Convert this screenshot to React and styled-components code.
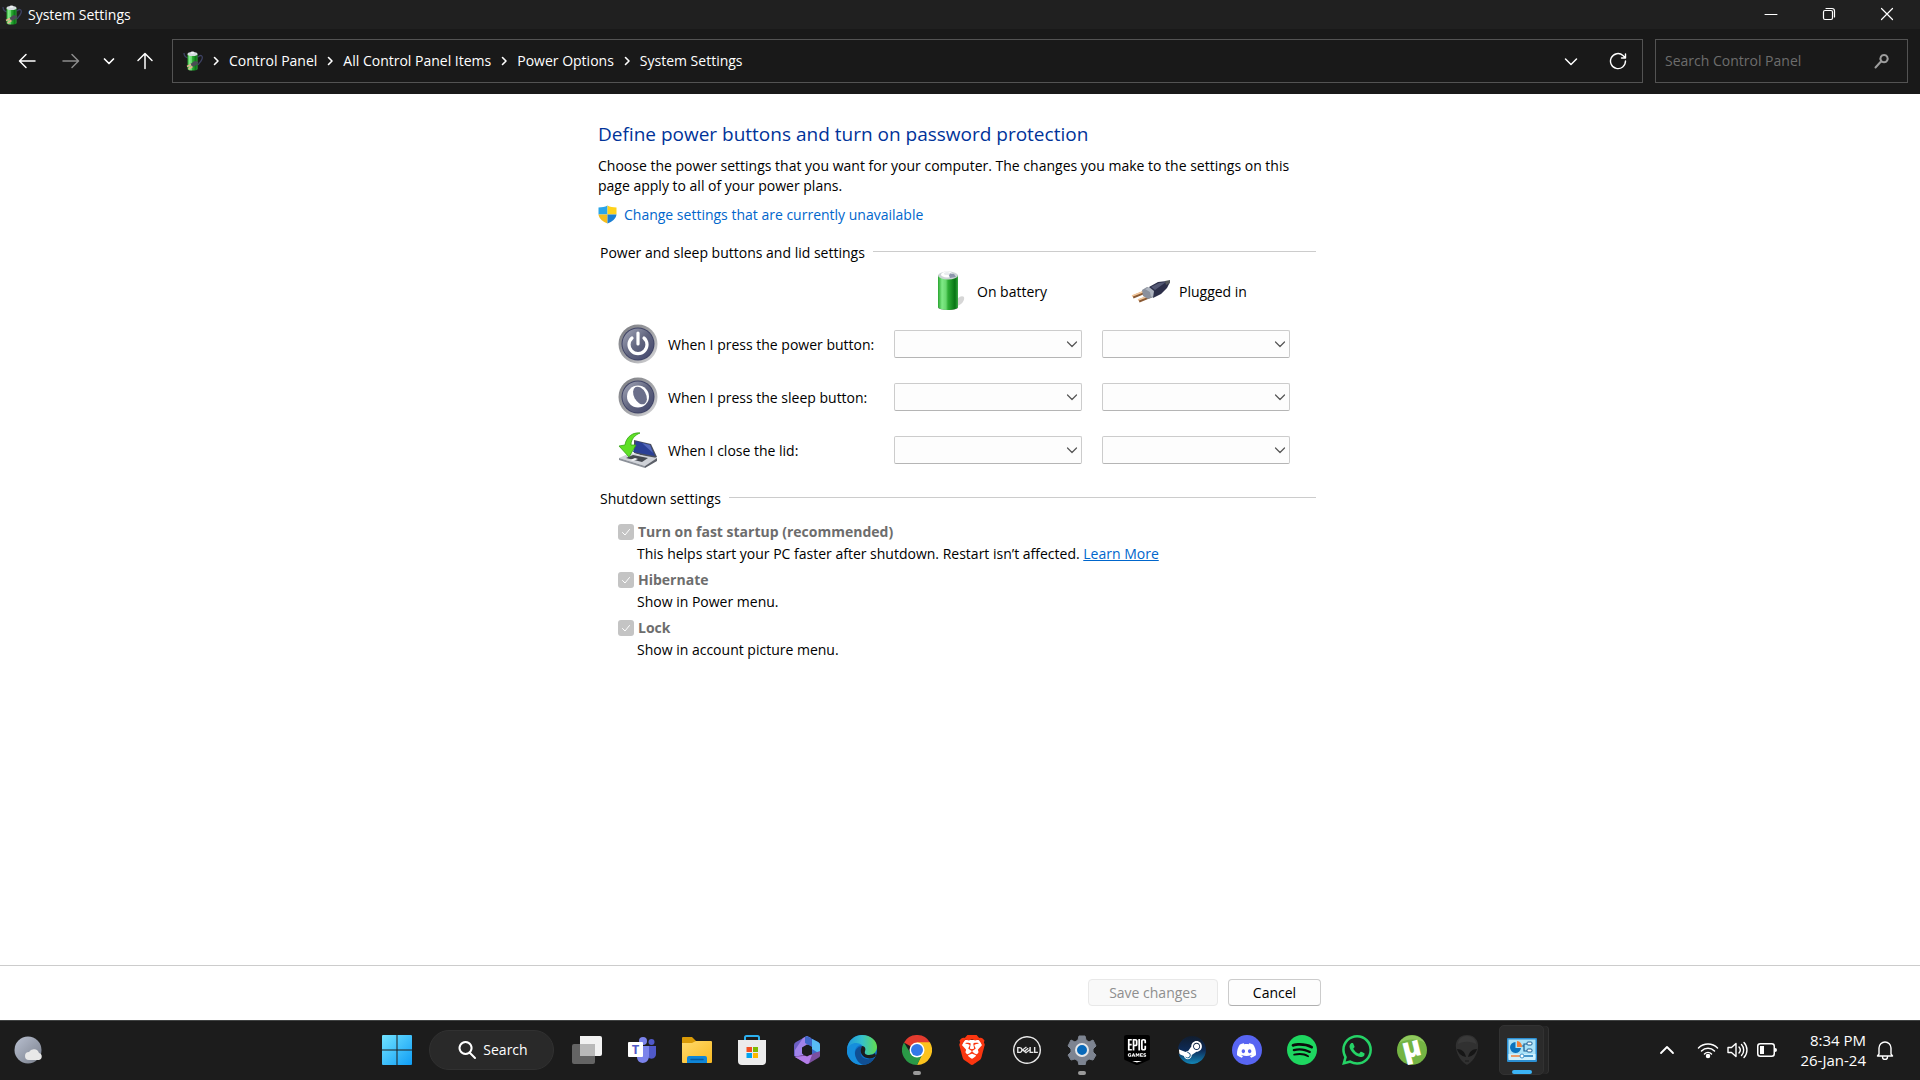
// src/App.jsx
import React from 'react';
import styled, { createGlobalStyle } from 'styled-components';
import { SiBrave, SiDell, SiEpicgames, SiSteam, SiDiscord, SiSpotify, SiWhatsapp } from 'react-icons/si';


const GlobalStyle = createGlobalStyle`
  * {
    box-sizing: border-box;
  }

  body {
    margin: 0;
    background: #fff;
    color: #000;
    font-family: "Open Sans", "Noto Sans", sans-serif;
    font-size: 14px;
    line-height: 20px;
  }

  button, input, select {
    font: inherit;
    color: inherit;
    margin: 0;
  }

  svg {
    display: block;
    flex-shrink: 0;
  }
`;

const Screen = styled.div`
  display: flex;
  flex-direction: column;
  min-height: 100vh;
`;

/* ---------- window chrome ---------- */

const TitleBar = styled.header`
  display: flex;
  align-items: center;
  gap: 6px;
  height: 29px;
  padding: 0 4px 0 2px;
  background: #202020;
  color: #fff;
`;

const WindowTitle = styled.span`
  flex: 1;
`;

const WindowButtons = styled.div`
  display: flex;
`;

const WindowButton = styled.button`
  display: grid;
  place-items: center;
  width: 58px;
  height: 28px;
  padding: 0 0 2px;
  border: 0;
  background: none;
`;

const NavBar = styled.nav`
  display: flex;
  align-items: center;
  gap: 5px;
  height: 65px;
  padding: 0 12px 1px 7px;
  background: #191919;
  color: #fff;
`;

const NavButtons = styled.div`
  display: flex;
  align-items: center;
`;

const NavButton = styled.button`
  display: grid;
  place-items: center;
  width: ${(props) => props.$width}px;
  height: 36px;
  padding: 0;
  border: 0;
  background: none;
  color: ${(props) => (props.disabled ? '#8c8c8c' : '#fff')};
`;

const AddressBar = styled.div`
  display: flex;
  flex: 1;
  align-items: center;
  height: 44px;
  padding: 0 0 0 10px;
  border: 1px solid #535353;
`;

const Crumbs = styled.div`
  display: flex;
  flex: 1;
  align-items: center;
  gap: 8px;

  a {
    color: #fff;
    text-decoration: none;
  }
`;

const SearchBox = styled.label`
  display: flex;
  align-items: center;
  width: 253px;
  height: 44px;
  margin-left: 7px;
  padding: 0 17px 0 9px;
  border: 1px solid #535353;
  color: #9d9d9d;

  input {
    flex: 1;
    min-width: 0;
    padding: 0;
    border: 0;
    outline: 0;
    background: none;
  }

  input::placeholder {
    color: #6d6d6d;
    opacity: 1;
  }
`;

/* ---------- page ---------- */

const Main = styled.main`
  flex: 1;
  padding-top: 26px;
`;

const Column = styled.div`
  max-width: 724px;
  margin: 0 auto;
`;

const Heading = styled.h1`
  margin: 0 0 8px;
  color: #003399;
  font-size: 19px;
  font-weight: 400;
  line-height: 28px;
`;

const Intro = styled.p`
  margin: 0 0 9px;
`;

const AdminLink = styled.a`
  display: flex;
  align-items: center;
  gap: 7px;
  width: fit-content;
  color: #0066cc;
  text-decoration: none;
`;

const GroupTitle = styled.h2`
  display: flex;
  align-items: center;
  gap: 8px;
  margin: ${(props) => props.$top}px 6px 0 2px;
  font-size: 14px;
  font-weight: 400;
  line-height: 20px;

  &::after {
    content: '';
    flex: 1;
    height: 1px;
    margin-bottom: 3px;
    background: #ccc;
  }
`;

const SettingsGrid = styled.div`
  display: grid;
  grid-template-columns: 40px 216px 188px 188px;
  grid-auto-rows: 53px;
  column-gap: 10px;
  align-items: center;
  margin: 1px 0 0 20px;
`;

const RowLabel = styled.span`
  padding-top: 2px;
`;

const Source = styled.div`
  display: flex;
  align-items: center;
  gap: 8px;
  grid-column: ${(props) => props.$column};
  padding-left: ${(props) => props.$inset}px;
`;

const SelectWrap = styled.div`
  position: relative;
  margin-left: ${(props) => (props.$second ? 10 : 0)}px;
  margin-right: ${(props) => (props.$second ? -10 : 0)}px;

  select {
    display: block;
    width: 100%;
    height: 28px;
    padding: 0 28px 0 8px;
    border: 1px solid #ccc;
    border-bottom-color: #b5b5b5;
    border-radius: 2px;
    background: #fdfdfd;
    appearance: none;
  }

  svg {
    position: absolute;
    right: 4px;
    top: 9px;
    color: #555;
    pointer-events: none;
  }
`;

const Options = styled.div`
  display: grid;
  gap: 4px;
  margin: 12px 0 0 20px;
`;

const OptionLabel = styled.label`
  display: flex;
  align-items: center;
  gap: 4px;
  color: #6d6d6d;
  font-weight: 700;
  line-height: 22px;
`;

const CheckWrap = styled.span`
  display: grid;
  width: 16px;
  height: 16px;

  input, svg {
    grid-area: 1 / 1;
  }

  input {
    width: 16px;
    height: 16px;
    border-radius: 3px;
    background: #c4c4c4;
    appearance: none;
  }
`;

const OptionText = styled.p`
  margin: 0 0 0 19px;
  line-height: 22px;

  a {
    color: #0066cc;
  }
`;

const Footer = styled.footer`
  border-top: 1px solid #ccc;
  padding: 13px 0 14px;
`;

const Actions = styled(Column)`
  display: flex;
  justify-content: flex-end;
  gap: 10px;
  padding-right: 1px;
`;

const ActionButton = styled.button`
  width: ${(props) => props.$width}px;
  height: 27px;
  padding: 0;
  border: 1px solid #ccc;
  border-bottom-color: #b0b0b0;
  border-radius: 4px;
  background: #fdfdfd;

  &:disabled {
    border-color: #e8e8e8;
    background: #f9f9f9;
    color: #8e8e8e;
  }
`;

/* ---------- taskbar ---------- */

const Taskbar = styled.div`
  display: grid;
  grid-template-columns: 1fr auto 1fr;
  align-items: center;
  height: 60px;
  padding: 0 2px 1px 0;
  border-top: 1px solid #404242;
  background: #1c1c1c;
  color: #fff;
`;

const Weather = styled.button`
  width: fit-content;
  padding: 0 0 0 14px;
  border: 0;
  background: none;
`;

const Apps = styled.div`
  display: flex;
  align-items: center;
`;

const AppButton = styled.button`
  position: relative;
  display: grid;
  place-items: center;
  width: 45px;
  height: 50px;
  margin: 0 5px;
  padding: 0;
  border: ${(props) => (props.$active ? '1px solid #323232' : '0')};
  border-radius: 5px;
  background: ${(props) => (props.$active ? '#2b2b2b' : 'none')};
  box-shadow: ${(props) => (props.$active ? '5px 0 0 -1px #252525, 6px 0 0 -1px #333' : 'none')};

  &::after {
    content: '';
    display: ${(props) => (props.$running || props.$active ? 'block' : 'none')};
    position: absolute;
    bottom: 0;
    left: 50%;
    width: ${(props) => (props.$active ? 20 : 8)}px;
    height: 4px;
    margin-left: ${(props) => (props.$active ? -10 : -4)}px;
    border-radius: 2px;
    background: ${(props) => (props.$active ? '#3cb4f5' : '#9a9a9a')};
  }
`;

const TaskSearch = styled.button`
  display: flex;
  align-items: center;
  justify-content: center;
  gap: 6px;
  width: 125px;
  height: 40px;
  margin: 0 5px;
  padding: 0 0 0 2px;
  border: 1px solid #313131;
  border-radius: 20px;
  background: #292929;
`;

const Layered = styled.span`
  display: grid;
  place-items: center;

  > svg {
    grid-area: 1 / 1;
  }
`;

const SteamLogo = styled(SiSteam)`
  fill: url(#steamBlue);
`;

const Tray = styled.div`
  display: flex;
  align-items: center;
  justify-content: flex-end;
  padding-right: 22px;
`;

const TrayButton = styled.button`
  display: flex;
  align-items: center;
  gap: 8px;
  margin-right: ${(props) => props.$space || 0}px;
  padding: 0;
  border: 0;
  background: none;
`;

const Clock = styled.button`
  margin-right: 8px;
  padding: 0;
  border: 0;
  background: none;
  font-size: 15px;
  text-align: right;
`;


const Line = ({ w = 20, h = 20, d, width = 1.5, ...rest }) => (
  <svg width={w} height={h} viewBox={`0 0 ${w} ${h}`} fill="none" stroke="currentColor" strokeWidth={width} strokeLinecap="round" strokeLinejoin="round" aria-hidden="true" {...rest}>
    <path d={d} />
  </svg>
);

const PowerPlanIcon = () => (
  <svg width="20" height="20" viewBox="0 0 20 20" aria-hidden="true">
    <path d="M1 2c0 3 1 4 4 5M15 6c3-3 5-1 4 2s-3 4-4 6" fill="none" stroke="#3d4162" strokeWidth="1.300" />
    <path d="M4.500 3h10v15c0 2-10 2-10 0z" fill="url(#battery)" />
    <ellipse cx="9.500" cy="3" rx="5" ry="2" fill="#d5dcdf" />
    <ellipse cx="9.500" cy="1.600" rx="2" ry="1.200" fill="#eef2f3" />
    <path d="M7.500 13l4-3 4 1-2 3-4 2z" fill="#4a4b55" />
    <path d="M4 15.500l4-2M5.500 18l4-2.500" stroke="#e2b28e" strokeWidth="1.500" />
  </svg>
);

const BatteryIcon = () => (
  <svg width="40" height="40" viewBox="0 0 40 40" aria-hidden="true">
    <path d="M28 35c4-1 8-5 7-9-2-2-5 0-8 3z" fill="#c4c4c4" opacity=".7" />
    <ellipse cx="19" cy="36.500" rx="10" ry="2.500" fill="#6d746d" />
    <path d="M9 4v32c1 4 19 4 20 0V4z" fill="url(#battery)" />
    <ellipse cx="19" cy="4.500" rx="10" ry="4" fill="#cdd4d6" />
    <ellipse cx="18" cy="3.500" rx="6" ry="3" fill="#fff" />
    <path d="M19 2l6 1 2 3-6 1z" fill="#8e96ad" />
    <ellipse cx="18" cy="2.500" rx="3" ry="1.600" fill="#e8ecee" />
  </svg>
);

const PlugIcon = () => (
  <svg width="40" height="40" viewBox="0 0 40 40" aria-hidden="true">
    <path d="M2 26l12-5M8 30l12-5" stroke="#8a5a34" strokeWidth="3" />
    <path d="M1 25l13-5M7 29l13-5" stroke="#f2c79c" strokeWidth="1.800" />
    <path d="M11 19l5-3 8 3-1 7-6 2-5-3z" fill="#8b909c" />
    <path d="M14 18l5-2 5 3-1 6-3 1-1-5z" fill="#aeb4bf" />
    <path d="M18 16l9-5 9-1 3 1-3 6-6 6-8 4 1-7z" fill="#2c2f49" />
    <path d="M20 16l8-4 7-1-11 8z" fill="#535873" />
    <path d="M34 10l5-1v3l-4 2z" fill="#55595b" />
  </svg>
);

const RoundIcon = ({ children }) => (
  <svg width="40" height="40" viewBox="0 0 40 40" aria-hidden="true">
    <circle cx="20" cy="20" r="19.500" fill="url(#rim)" />
    <circle cx="20" cy="20" r="16.500" fill="#3f4365" />
    <circle cx="20" cy="20" r="15.500" fill="url(#orb)" />
    {children}
  </svg>
);

const LidIcon = () => (
  <svg width="40" height="40" viewBox="0 0 40 40" aria-hidden="true">
    <path d="M16 10l17 4 6 13-4 2-19-6z" fill="#4a4f5d" />
    <path d="M18 11l14 4 5 11-22-4z" fill="#2b4096" />
    <path d="M24 13l8 2 3 8z" fill="#5569bb" />
    <path d="M1 28l11-5 27 5-12 8z" fill="#cfd2d8" />
    <path d="M1 28v2l26 8v-2z" fill="#8c9199" />
    <path d="M27 36v2l12-7v-3z" fill="#5c6069" />
    <path d="M8 28l7-3 15 3-6 4z" fill="#454951" />
    <path d="M12 30l5-2 3 1-5 2z" fill="#f0f1f3" />
    <path d="M22 3c-7-1-14 4-15 12l-6 1 10 11 7-12-5 0c0-6 4-10 9-12z" fill="#5fe026" stroke="#35a316" strokeWidth=".8" />
  </svg>
);

const ShieldIcon = () => (
  <svg width="19" height="20" viewBox="0 0 19 20" aria-hidden="true">
    <path d="M9.500.5C7 2 4 2.300.5 2.500V9.500h9z" fill="#2aa5e8" />
    <path d="M9.500.5C12 2 15 2.300 18.500 2.500V9.500h-9z" fill="#ffd21a" />
    <path d="M.5 9.500h9v9C5 17 1 13.500.5 9.500z" fill="#f5bd1d" />
    <path d="M18.500 9.500h-9v9c4.500-1.500 8.500-5 9-9z" fill="#1b7fd3" />
  </svg>
);

const Chevron = () => <Line w={10} h={12} d="M3.500 2.500L7 6L3.500 9.500" width={1.6} />;

const crumbs = ['Control Panel', 'All Control Panel Items', 'Power Options', 'System Settings'];

const rows = [
  {
    label: 'When I press the power button:',
    icon: (
      <RoundIcon>
        <path d="M14 14a9 9 0 1 0 12 0M20 9v11" fill="none" stroke="#fff" strokeWidth="3.200" strokeLinecap="round" />
      </RoundIcon>
    ),
  },
  {
    label: 'When I press the sleep button:',
    icon: (
      <RoundIcon>
        <circle cx="20" cy="19.500" r="11" fill="#fff" />
        <ellipse cx="22" cy="18.500" rx="6" ry="9.500" fill="#6b6f8a" transform="rotate(-28 22 18.500)" />
      </RoundIcon>
    ),
  },
  { label: 'When I close the lid:', icon: <LidIcon /> },
];

const options = [
  {
    name: 'Turn on fast startup (recommended)',
    text: (
      <>
        This helps start your PC faster after shutdown. Restart isn’t affected. <a href="#learn">Learn More</a>
      </>
    ),
  },
  { name: 'Hibernate', text: 'Show in Power menu.' },
  { name: 'Lock', text: 'Show in account picture menu.' },
];

const apps = [
  {
    name: 'Task View',
    icon: (
      <svg width="30" height="28" viewBox="0 0 30 28">
        <path d="M8 0h20q2 0 2 2v16q0 2-2 2H8z" fill="#f2f2f2" />
        <rect y="8" width="23" height="20" rx="2" fill="#646464" />
        <path d="M8 8h15v12H8z" fill="#b9b9b9" />
      </svg>
    ),
  },
  {
    name: 'Teams',
    icon: (
      <svg width="28" height="26" viewBox="0 0 28 26">
        <circle cx="15" cy="4" r="4" fill="#7b83eb" />
        <circle cx="23.500" cy="5" r="3" fill="#5059c9" />
        <path d="M17 9h11v8c0 5-6 6-8 3z" fill="#5059c9" />
        <path d="M8 9h13v10c0 9-12 9-12 1z" fill="#7b83eb" />
        <rect y="5" width="15" height="15" rx="1" fill="#fff" />
        <text x="7.500" y="17" textAnchor="middle" fontSize="13" fontWeight="700" fill="#5059c9">T</text>
      </svg>
    ),
  },
  {
    name: 'File Explorer',
    icon: (
      <svg width="30" height="28" viewBox="0 0 30 28">
        <path d="M0 2q0-1 1-1h9l4 4v5H0z" fill="#d99a07" />
        <path d="M0 7h10l4-2h15q1 0 1 1v20q0 1-1 1H1q-1 0-1-1z" fill="url(#folder)" />
        <path d="M5 27v-5q0-2 2-2h16q2 0 2 2v5z" fill="#0f86d8" />
        <path d="M9 23.500h12" stroke="#065a9f" strokeWidth="1.500" strokeLinecap="round" />
      </svg>
    ),
  },
  {
    name: 'Microsoft Store',
    icon: (
      <svg width="30" height="30" viewBox="0 0 30 30">
        <path d="M8 6V2.500Q8 1 9.500 1h11Q22 1 22 2.500V6" fill="none" stroke="#2cb0ef" strokeWidth="2" />
        <path d="M1 5h28v21q0 4-4 4H5q-4 0-4-4z" fill="#ececec" />
        <path d="M9.500 12H15v5H9.500z" fill="#f25022" />
        <path d="M16 12h5v5h-5z" fill="#7fba00" />
        <path d="M9.500 18H15v5H9.500z" fill="#00a4ef" />
        <path d="M16 18h5v5h-5z" fill="#ffb900" />
      </svg>
    ),
  },
  {
    name: 'Microsoft 365',
    icon: (
      <svg width="28" height="30" viewBox="0 0 28 30">
        <path d="M14 1L3 7Q1 8 1 10v11l7 3 1-11 8-5z" fill="#6c5fc4" />
        <path d="M10 3l4-2 4 2v5l-7 4-1 11-8-2V15z" fill="#a183ea" />
        <path d="M12 2l2-1 11 6q2 1 2 3v11l-8-2V12l-7-4z" fill="#3f68c9" />
        <path d="M19 4l6 3q2 1 2 3v9l-8-5v-4z" fill="#58bdf4" />
        <path d="M27 16v5q0 1-2 2l-10 6-13-7 7-2 5 1z" fill="#7b4f9f" />
        <path d="M2 22l8-1 9-1-3 8q-2 2-4 0z" fill="#b37de8" />
        <path d="M14 9.500l5 3v6l-5 3-5-3v-6z" fill="#1c1c1c" />
      </svg>
    ),
  },
  {
    name: 'Edge',
    icon: (
      <svg width="30" height="30" viewBox="0 0 30 30">
        <circle cx="15" cy="15" r="15" fill="#0c70cd" />
        <path d="M0 14C1 5 8 0 15 0c9 0 15 6 15 12 0 5-4 8-8 8-4 0-5-2-4-4 1-6-9-10-18-2z" fill="url(#edgeTop)" />
        <path d="M0 15c2-7 10-9 15-5-5 0-8 4-7 10 1 5 4 9 9 10C7 31-1 23 0 15z" fill="#168edc" />
        <path d="M15 11c-5 1-7 4-7 8 1 6 5 11 10 11 4-1 7-3 9-7-7 3-15 0-13-7z" fill="#104f93" />
        <path d="M15 11c3 0 4 3 3 5-1 3 1 4 4 4 3 0 5-1 6-2l1 3c-2 2-6 3-9 2-5-1-8-6-5-12z" fill="#1c1c1c" />
      </svg>
    ),
  },
  {
    name: 'Chrome',
    running: true,
    icon: (
      <svg width="30" height="30" viewBox="0 0 30 30">
        <path d="M15 15L2 7.500A15 15 0 0 1 28 7.500z" fill="#e33b2e" />
        <path d="M28 7.500A15 15 0 0 1 15 30l7-15-7-7.500z" fill="#fcc31e" />
        <path d="M15 30A15 15 0 0 1 2 7.500L9 19l12-1z" fill="#2a9947" />
        <path d="M15 7.500h13L21 18z" fill="#fcc31e" />
        <circle cx="15" cy="15" r="7.500" fill="#fff" />
        <circle cx="15" cy="15" r="6" fill="#3279e8" />
      </svg>
    ),
  },
  {
    name: 'Brave',
    icon: (
      <Layered>
        <svg width="30" height="30" viewBox="0 0 30 30">
          <path d="M7 5h16l3 7-4 12-7 4-7-4L4 12z" fill="#fff" />
        </svg>
        <SiBrave size={30} color="#fb3610" />
      </Layered>
    ),
  },
  { name: 'Dell', icon: <SiDell size={28} color="#e9e9e9" /> },
  {
    name: 'Settings',
    running: true,
    icon: (
      <svg width="30" height="30" viewBox="0 0 30 30">
        <path d="M11 5l1-4h6l1 4 3 2 4-2 3 6-3 3v3l3 3-3 5-4-1-3 2-1 4h-6l-1-4-3-2-4 1-3-5 3-3v-3l-3-3 3-6 4 2z" fill="#7d8491" stroke="#7d8491" strokeLinejoin="round" />
        <circle cx="15" cy="15" r="6" fill="#0869b9" stroke="#e5e7e9" strokeWidth="2" />
      </svg>
    ),
  },
  {
    name: 'Epic Games',
    icon: (
      <Layered>
        <svg width="30" height="30" viewBox="0 0 30 30">
          <path d="M5 3h20v22l-10 3-10-3z" fill="#fff" />
        </svg>
        <SiEpicgames size={30} color="#000" />
      </Layered>
    ),
  },
  {
    name: 'Steam',
    icon: (
      <Layered>
        <svg width="30" height="30" viewBox="0 0 30 30">
          <circle cx="15" cy="15" r="13" fill="#fff" />
        </svg>
        <SteamLogo size={28} />
      </Layered>
    ),
  },
  {
    name: 'Discord',
    icon: (
      <Layered>
        <svg width="30" height="30" viewBox="0 0 30 30">
          <circle cx="15" cy="15" r="15" fill="#5865f2" />
        </svg>
        <SiDiscord size={19} color="#fff" />
      </Layered>
    ),
  },
  {
    name: 'Spotify',
    icon: (
      <Layered>
        <svg width="30" height="30" viewBox="0 0 30 30">
          <circle cx="15" cy="15" r="14" fill="#0b0b0b" />
        </svg>
        <SiSpotify size={30} color="#1ed760" />
      </Layered>
    ),
  },
  { name: 'WhatsApp', icon: <SiWhatsapp size={30} color="#25d366" /> },
  {
    name: 'uTorrent',
    icon: (
      <svg width="30" height="30" viewBox="0 0 30 30" overflow="visible">
        <circle cx="15" cy="15" r="15" fill="#74b443" />
        <path d="M2 8a15 15 0 0 1 26 0C20 3 9 4 2 8z" fill="#8fc85e" />
        <text x="15" y="22" textAnchor="middle" fontSize="28" fontWeight="800" fill="#fff" transform="rotate(-14 15 15)">µ</text>
      </svg>
    ),
  },
  {
    name: 'Alienware',
    icon: (
      <svg width="24" height="30" viewBox="0 0 24 30">
        <path d="M12 0C4 0 0 6 1 13c1 8 6 14 11 17 5-3 10-9 11-17C24 6 20 0 12 0z" fill="#313131" />
        <path d="M12 1C6 1 3 5 3 9c5-3 13-3 18 0 0-4-3-8-9-8z" fill="#3a3a3a" />
        <path d="M2 14c5 0 8 3 9 8-5-1-8-4-9-8zM22 14c-5 0-8 3-9 8 5-1 8-4 9-8z" fill="#161616" />
        <path d="M10 26h4" stroke="#1b1b1b" />
      </svg>
    ),
  },
  {
    name: 'Control Panel',
    active: true,
    icon: (
      <svg width="30" height="24" viewBox="0 0 30 24">
        <rect width="30" height="24" rx="1" fill="#2c8fd2" />
        <rect x="1.500" y="1.500" width="27" height="19" fill="#aae2f8" />
        <path d="M1.500 16h27v6h-27z" fill="#cff0fc" />
        <path d="M8.500 4A5.500 5.500 0 1 0 14 10H8.500z" fill="#0972bd" />
        <path d="M10 3v6h5a5.500 5.500 0 0 0-5-6z" fill="#f0803a" />
        <path d="M15 8h2V6h3M17 8v5h3" fill="none" stroke="#185d91" strokeWidth="1.200" />
        <rect x="20" y="4" width="5" height="3" rx="1" fill="#fff" stroke="#185d91" />
        <rect x="20" y="11" width="5" height="3" rx="1" fill="#fff" stroke="#185d91" />
        <path d="M4 18h10" stroke="#f0803a" strokeWidth="1.500" />
        <path d="M15 18h11" stroke="#1879bb" strokeWidth="1.500" />
        <circle cx="15" cy="18" r="2" fill="#fff" stroke="#3d93cb" />
      </svg>
    ),
  },
];

// gradients shared by the icons above
const GradientDefs = styled.svg`
  position: absolute;
`;

const Gradients = () => (
  <GradientDefs width="0" height="0" aria-hidden="true">
    <defs>
      <linearGradient id="battery">
        <stop offset="0" stopColor="#29a52f" />
        <stop offset=".2" stopColor="#7fea86" />
        <stop offset=".4" stopColor="#68d76e" />
        <stop offset=".5" stopColor="#2fae36" />
        <stop offset=".85" stopColor="#077414" />
        <stop offset="1" stopColor="#39a842" />
      </linearGradient>
      <linearGradient id="rim" x1="0" y1="0" x2="1" y2="1">
        <stop offset="0" stopColor="#77787d" />
        <stop offset=".6" stopColor="#a9aaae" />
        <stop offset="1" stopColor="#dedee0" />
      </linearGradient>
      <linearGradient id="orb" x1="0" y1="0" x2="1" y2="1">
        <stop offset="0" stopColor="#a5a9bb" />
        <stop offset=".5" stopColor="#62667f" />
        <stop offset="1" stopColor="#41456d" />
      </linearGradient>
      <linearGradient id="folder" x1="0" y1="0" x2="1" y2="1">
        <stop offset="0" stopColor="#ffda6b" />
        <stop offset="1" stopColor="#f9b922" />
      </linearGradient>
      <linearGradient id="edgeTop">
        <stop offset="0" stopColor="#1e96dd" />
        <stop offset=".5" stopColor="#35c1cc" />
        <stop offset="1" stopColor="#62dc4e" />
      </linearGradient>
      <linearGradient id="steamBlue" x1="0" y1="0" x2="0" y2="1">
        <stop offset="0" stopColor="#111d2e" />
        <stop offset=".5" stopColor="#0d2a56" />
        <stop offset="1" stopColor="#1387b8" />
      </linearGradient>
      <linearGradient id="windows" x1="0" y1="0" x2="1" y2="1">
        <stop offset="0" stopColor="#71e3ff" />
        <stop offset="1" stopColor="#0f9df5" />
      </linearGradient>
      <linearGradient id="moon" x1="0" y1="0" x2="1" y2="1">
        <stop offset="0" stopColor="#b9c0d0" />
        <stop offset="1" stopColor="#797f8c" />
      </linearGradient>
    </defs>
  </GradientDefs>
);


const App = () => (
  <Screen>
    <GlobalStyle />
    <Gradients />

    <TitleBar>
      <PowerPlanIcon />
      <WindowTitle>System Settings</WindowTitle>
      <WindowButtons>
        <WindowButton aria-label="Minimize"><Line w={14} h={14} d="M1 7.500H13" width={1} /></WindowButton>
        <WindowButton aria-label="Restore"><Line w={14} h={14} d="M3 3.500h6q1.500 0 1.500 1.500v6q0 1.500-1.500 1.500H3Q1.500 12.500 1.500 11V5Q1.500 3.500 3 3.500zM4 1.500h6q2.500 0 2.500 2.500v6" width={1.2} /></WindowButton>
        <WindowButton aria-label="Close"><Line w={14} h={14} d="M1.500 1.500l11 11M12.500 1.500l-11 11" width={1.2} /></WindowButton>
      </WindowButtons>
    </TitleBar>

    <NavBar>
      <NavButtons>
        <NavButton $width={40} aria-label="Back"><Line d="M18 10H3M9 3.500L2.500 10L9 16.500" /></NavButton>
        <NavButton $width={48} aria-label="Forward" disabled><Line d="M2 10h15M11 3.500l6.500 6.500L11 16.500" /></NavButton>
        <NavButton $width={28} aria-label="Recent locations"><Line w={12} h={12} d="M1.500 4L6 8.500L10.500 4" width={1.7} /></NavButton>
        <NavButton $width={44} aria-label="Up"><Line d="M10 17.500V3M3 9.500L10 2.500L17 9.500" /></NavButton>
      </NavButtons>
      <AddressBar>
        <Crumbs>
          <PowerPlanIcon />
          {crumbs.map((crumb) => (
            <React.Fragment key={crumb}>
              <Chevron />
              <a href="#crumb">{crumb}</a>
            </React.Fragment>
          ))}
        </Crumbs>
        <NavButton $width={46} aria-label="Previous locations"><Line w={14} h={14} d="M1.500 5L7 10.500L12.500 5" /></NavButton>
        <NavButton $width={48} aria-label="Refresh"><Line w={18} h={18} d="M16.500 9A7.500 7.500 0 1 1 14 3.500L16 5.500M16.500 2v4h-4" width={1.4} /></NavButton>
      </AddressBar>
      <SearchBox>
        <input type="text" placeholder="Search Control Panel" aria-label="Search Control Panel" />
        <Line w={16} h={16} d="M1.500 14.500L6.500 9M10 2a3.600 3.600 0 1 0 .1 0z" width={2} />
      </SearchBox>
    </NavBar>

    <Main>
      <Column>
        <Heading>Define power buttons and turn on password protection</Heading>
        <Intro>
          Choose the power settings that you want for your computer. The changes you make to the settings on this page apply to all of your power plans.
        </Intro>
        <AdminLink href="#change"><ShieldIcon />Change settings that are currently unavailable</AdminLink>

        <GroupTitle $top={18}>Power and sleep buttons and lid settings</GroupTitle>
        <SettingsGrid>
          <Source $column={3} $inset={35}><BatteryIcon /><RowLabel>On battery</RowLabel></Source>
          <Source $column={4} $inset={39}><PlugIcon /><RowLabel>Plugged in</RowLabel></Source>
          {rows.map((row) => (
            <React.Fragment key={row.label}>
              {row.icon}
              <RowLabel>{row.label}</RowLabel>
              {['On battery', 'Plugged in'].map((source, i) => (
                <SelectWrap key={source} $second={i === 1}>
                  <select aria-label={`${row.label} ${source}`} />
                  <Line w={12} h={10} d="M1.500 3L6 7.500L10.500 3" width={1.2} />
                </SelectWrap>
              ))}
            </React.Fragment>
          ))}
        </SettingsGrid>

        <GroupTitle $top={13}>Shutdown settings</GroupTitle>
        <Options>
          {options.map((option) => (
            <div key={option.name}>
              <OptionLabel>
                <CheckWrap>
                  <input type="checkbox" defaultChecked disabled />
                  <Line w={16} h={16} d="M4.500 8.500L7 11L11.500 5.500" width={1} color="#fff" />
                </CheckWrap>
                {option.name}
              </OptionLabel>
              <OptionText>{option.text}</OptionText>
            </div>
          ))}
        </Options>
      </Column>
    </Main>

    <Footer>
      <Actions>
        <ActionButton $width={130} disabled>Save changes</ActionButton>
        <ActionButton $width={93}>Cancel</ActionButton>
      </Actions>
    </Footer>

    <Taskbar>
      <Weather aria-label="Weather">
        <svg width="30" height="28" viewBox="0 0 30 28">
          <circle cx="14" cy="14" r="13.500" fill="url(#moon)" />
          <path d="M15 24a4 4 0 0 1 0-8 5.500 5.500 0 0 1 10 1 3.600 3.600 0 0 1 0 7z" fill="#e8e8e8" />
        </svg>
      </Weather>
      <Apps>
        <AppButton aria-label="Start">
          <svg width="30" height="30" viewBox="0 0 30 30" fill="url(#windows)">
            <path d="M1 0h13.500v14.500H0V1q0-1 1-1zM15.500 0H29q1 0 1 1v13.500H15.500zM0 15.500h14.500V30H1q-1 0-1-1zM15.500 15.500H30V29q0 1-1 1H15.500z" />
          </svg>
        </AppButton>
        <TaskSearch>
          <Line d="M12.500 12.500L18 18M8.500 2a6 6 0 1 0 .1 0z" width={2} />
          Search
        </TaskSearch>
        {apps.map((app) => (
          <AppButton key={app.name} aria-label={app.name} $running={app.running} $active={app.active}>
            {app.icon}
          </AppButton>
        ))}
      </Apps>
      <Tray>
        <TrayButton $space={22} aria-label="Show hidden icons"><Line w={16} h={14} d="M2 10l6-6l6 6" width={1.8} /></TrayButton>
        <TrayButton $space={22} aria-label="Network, volume and battery">
          <svg width="22" height="18" viewBox="0 0 22 18" fill="none" stroke="#fff" strokeWidth="1.500" strokeLinecap="round">
            <path d="M1.500 7a13.500 13.500 0 0 1 19 0M4.500 10a9.200 9.200 0 0 1 13 0M7.500 13a5 5 0 0 1 7 0" />
            <circle cx="11" cy="15" r="1.500" fill="#fff" />
          </svg>
          <Line w={22} h={18} d="M1 6.500h3.500L9 2.500v13l-4.500-4H1zM12 6a4.500 4.500 0 0 1 0 6M14.500 3.500a8 8 0 0 1 0 11M17 1.500a11 11 0 0 1 0 15" width={1.4} />
          <svg width="21" height="14" viewBox="0 0 21 14">
            <rect x=".75" y=".75" width="16.500" height="12.500" rx="2.500" fill="none" stroke="#fff" strokeWidth="1.500" />
            <path d="M3 3h4v8H3zM18 5q2 0 2 2t-2 2z" fill="#fff" />
          </svg>
        </TrayButton>
        <Clock>
          8:34 PM<br />26-Jan-24
        </Clock>
        <TrayButton aria-label="Notifications">
          <Line w={22} h={20} d="M5 14V8a6 6 0 0 1 12 0v6l1.500 2h-15zM8.500 17a2.500 2.500 0 0 0 5 0" width={1.4} />
        </TrayButton>
      </Tray>
    </Taskbar>
  </Screen>
);

export default App;
